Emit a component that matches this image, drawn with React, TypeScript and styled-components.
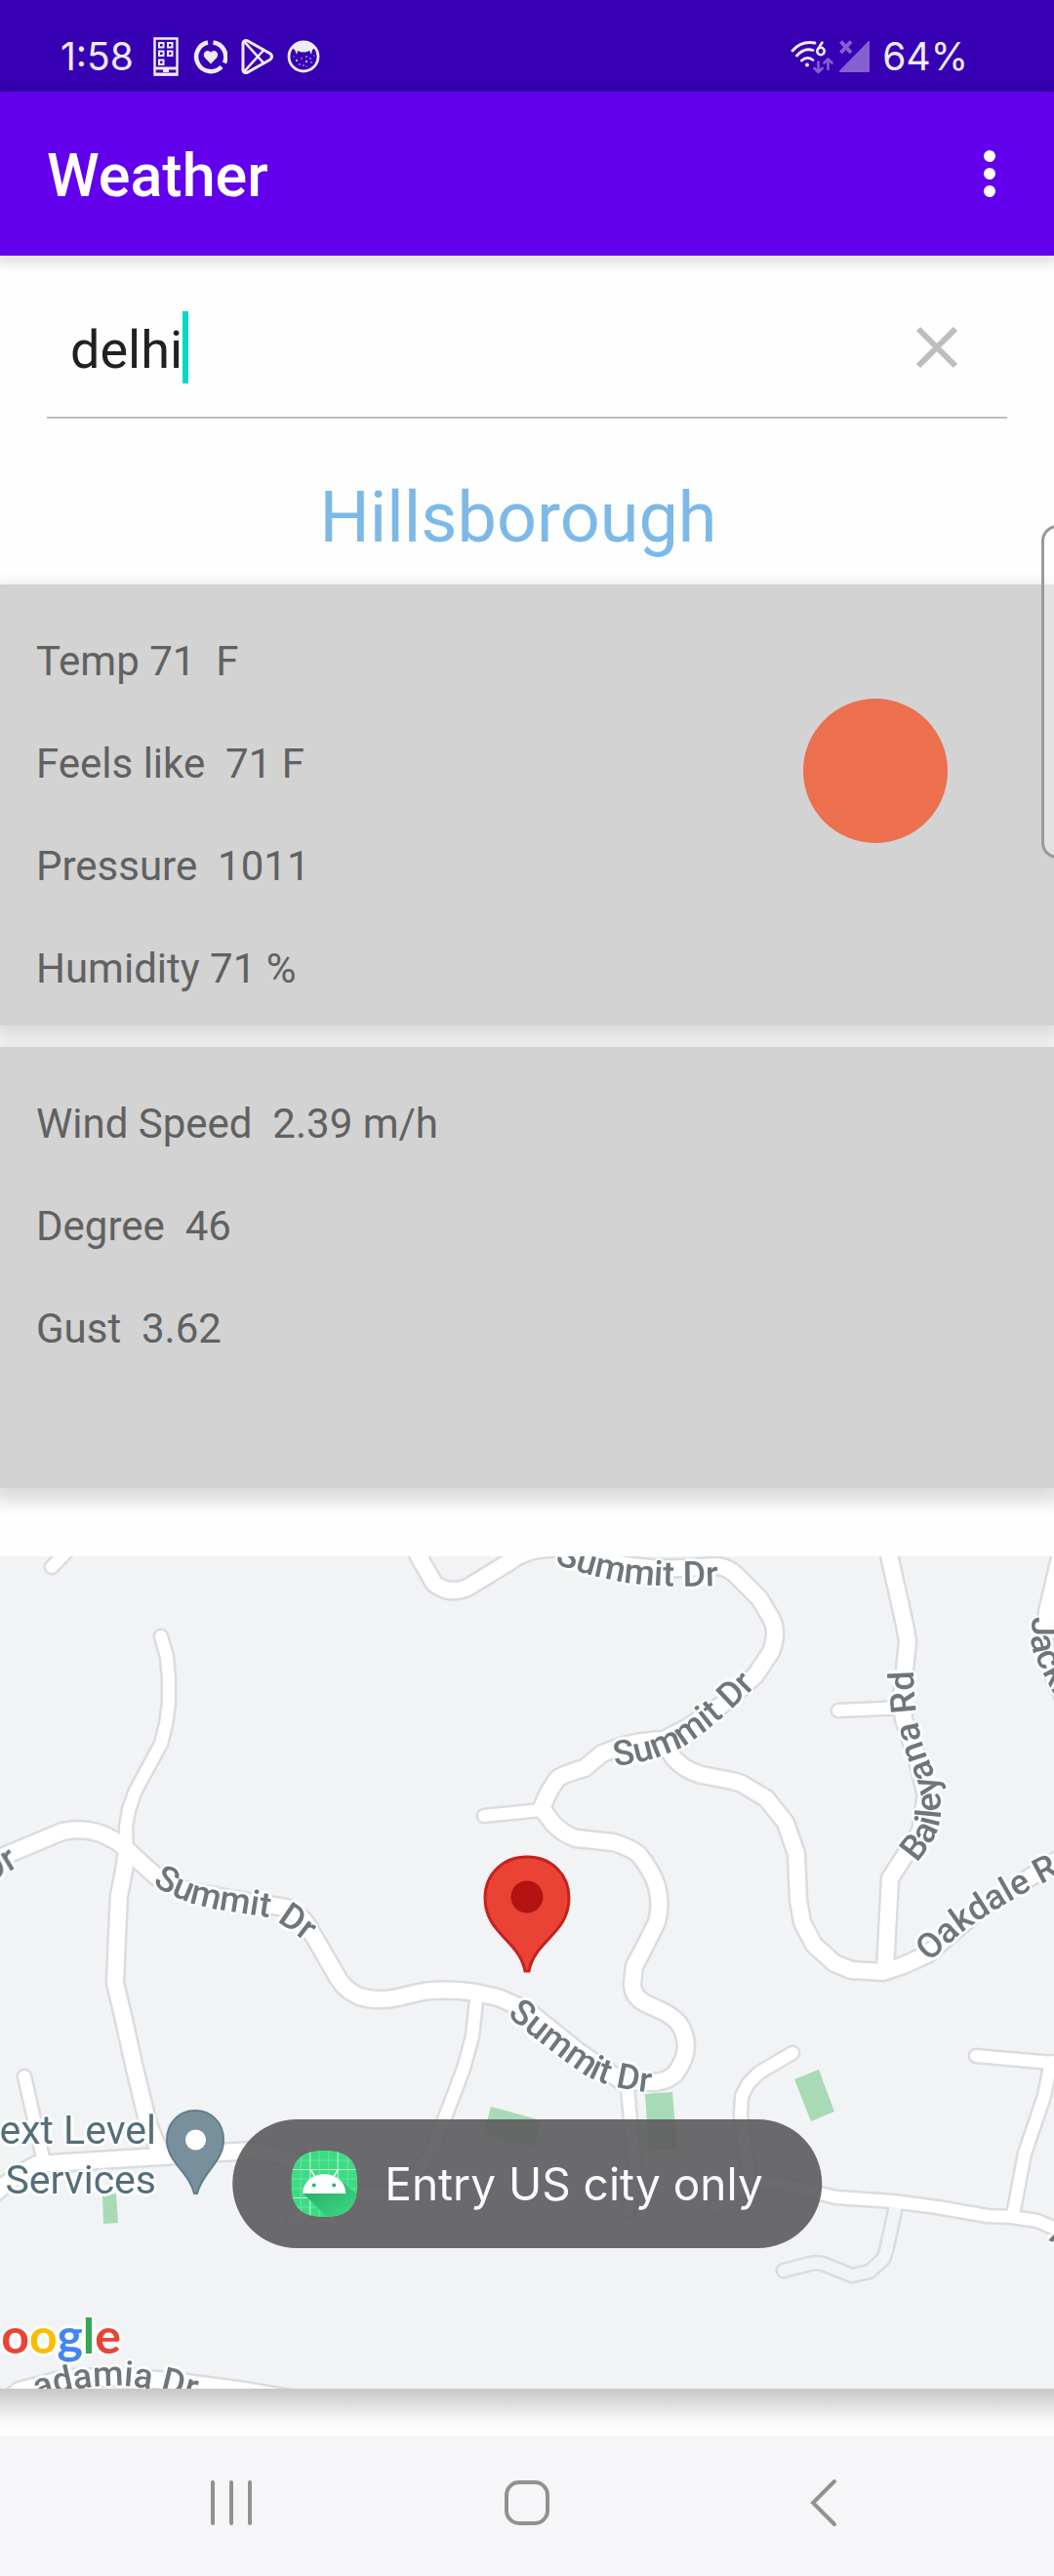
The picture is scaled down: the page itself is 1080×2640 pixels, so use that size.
import React, { useState } from "react";
import styled, { createGlobalStyle } from "styled-components";

const GlobalStyle = createGlobalStyle`
  *, *::before, *::after { box-sizing: border-box; }
  body {
    margin: 0;
    background: #fefefe;
    font-family: Roboto, "Liberation Sans", sans-serif;
  }
`;

const Screen = styled.div`
  position: relative;
  display: flex;
  flex-direction: column;
  min-height: 100vh;
  overflow: hidden;
`;

const StatusBar = styled.div`
  display: flex;
  justify-content: space-between;
  height: 94px;
  padding: 22px 88px 0 62px;
  background: #3700b3;
  color: #f0ebfa;
  font-family: Inter, Roboto, sans-serif;
  font-size: 39px;
  line-height: 72px;
`;

const StatusGroup = styled.div<{ $gap: number }>`
  display: flex;
  align-items: center;
  gap: ${(p) => p.$gap}px;

  svg { display: block; }
`;

const StatusText = styled.span`
  min-width: 81px;
`;

const Percent = styled.span`
  margin-left: 6px;
`;

const AppBar = styled.header`
  display: flex;
  align-items: center;
  justify-content: space-between;
  height: 168px;
  padding: 0 42px 0 48px;
  background: #6200ee;
  box-shadow: 0 4px 12px 4px rgba(0, 0, 0, 0.12);
`;

const Title = styled.h1`
  margin: 0;
  padding-top: 4px;
  color: #ffffff;
  font-size: 61px;
  font-weight: 500;
  line-height: 72px;
`;

const IconButton = styled.button`
  display: flex;
  align-items: center;
  justify-content: center;
  padding: 0;
  border: 0;
  background: none;
  cursor: pointer;
`;

const SearchBox = styled.form`
  display: flex;
  align-items: center;
  margin: 0 48px;
  padding: 57px 48px 34px 24px;
  border-bottom: 2px solid #bdbdbd;
`;

const SearchInput = styled.input`
  field-sizing: content;
  min-width: 20px;
  height: 74px;
  padding: 4px 0 0;
  border: 0;
  outline: 0;
  background: none;
  color: #212121;
  font: 400 54px/70px Roboto, "Liberation Sans", sans-serif;
`;

const Caret = styled.span`
  width: 6px;
  height: 74px;
  background: #03dac5;
`;

const ClearButton = styled(IconButton)`
  width: 48px;
  height: 48px;
  margin-left: auto;
`;

const City = styled.h2`
  margin: 0;
  padding: 60px 18px 26px 0;
  color: #7cb9e8;
  font-size: 72px;
  font-weight: 400;
  line-height: 84px;
  text-align: center;
`;

const Card = styled.section`
  display: flex;
  align-items: center;
  justify-content: space-between;
  min-height: 452px;
  padding: 0 109px 0 37px;
  background: #d3d3d3;
  box-shadow: 0 8px 16px 6px rgba(0, 0, 0, 0.14);

  & + & { margin-top: 22px; }
`;

const Readings = styled.ul`
  align-self: flex-start;
  margin: 0;
  padding: 26px 0 6px;
  list-style: none;
`;

const Reading = styled.li`
  color: #616161;
  font-size: 42px;
  line-height: 105px;
  white-space: pre;
`;

const Sun = styled.div`
  width: 148px;
  height: 148px;
  margin-top: -70px;
  border-radius: 50%;
  background: #ec6f4e;
`;

const MapCard = styled.section`
  margin-top: 70px;
  padding-bottom: 48px;
  background: linear-gradient(to top, #fefefe 4px, #f8f8f8 16px, #e4e4e4 28px, #cfcfcf 42px, #c8c8c8 48px);
`;

const MapSvg = styled.svg`
  display: block;
  width: 100%;
  height: auto;
  overflow: hidden;
  background: #f1f3f5;
`;

const RoadLabel = styled.text`
  font: 500 36px Roboto, "Liberation Sans", sans-serif;
  fill: #70757a;
`;

const PlaceLabel = styled.text`
  font: 400 41px Roboto, "Liberation Sans", sans-serif;
  fill: #546e7a;
`;

const MapBrand = styled.text`
  font: 700 50px Lato, "Open Sans", sans-serif;
`;

const NavBar = styled.nav`
  display: grid;
  grid-template-columns: repeat(3, 1fr);
  height: 144px;
  margin-top: auto;
  padding: 0 86px 6px;
  background: #f6f6f8;
`;

const Toast = styled.div`
  position: absolute;
  bottom: 336px;
  left: 50%;
  display: flex;
  align-items: center;
  gap: 28px;
  height: 132px;
  padding: 0 60px;
  border-radius: 66px;
  transform: translateX(-50%);
  background: rgba(91, 90, 92, 0.9);
  color: #fafaff;
  font-family: Inter, Roboto, sans-serif;
  font-size: 46px;
  line-height: 60px;
  white-space: nowrap;
`;

const EdgeHandle = styled.div`
  position: absolute;
  top: 538px;
  right: -20px;
  width: 33px;
  height: 342px;
  border: 3px solid #9a9a9a;
  border-radius: 18px;
  background: rgba(255, 255, 255, 0.35);
`;

type Line = { d: string; w?: number; hollow?: boolean };

const roads: Line[] = [
  { d: "M918 2261 L908 2307 L905 2315 L891 2328 L873 2332 L843 2320 Q836 2318 826 2321 L803 2327", w: 17, hollow: true },
  { d: "M53 1606 L80 1578", w: 17 },
  { d: "M165 1677 L171 1698 L173 1720 L173 1745 L170 1767 L165 1787 L138 1837 L132 1855 L129 1872 L130 1900", w: 17 },
  { d: "M130 1897 L127 1917 L122 1943 L120 1983 L118 2032 L127 2070 L138 2120 L152 2177 L165 2209" },
  { d: "M25 2128 L45 2216", w: 17 },
  { d: "M496 1861 L555 1855", w: 17 },
  { d: "M859 1753 L926 1750", w: 17 },
  { d: "M643 2140 L652 2237 L644 2265", w: 17 },
  { d: "M812 2104 L778 2124 L767 2135 L760 2148 L759 2167 L764 2207 L770 2237", w: 17 },
  { d: "M488 2050 L484 2087 L475 2120 L456 2170 L444 2200 Q432 2225 412 2241 Q396 2251 365 2248 L340 2250 L301 2277", w: 17 },
  { d: "M1000 2107 L1090 2115", w: 17 },
  { d: "M1077 2113 L1070 2148 L1050 2207 L1038 2270", w: 17 },
  { d: "M-15 2255 L0 2243 L21 2227 L38 2218 L100 2214 L165 2210 L241 2205 L262 2204 L289 2210 L305 2219 L330 2240 L365 2248" },
  { d: "M733 2262 L760 2243 L781 2237 L802 2238 L836 2247 L857 2252 L915 2256 L960 2262 L1012 2271 L1036 2272 L1063 2276 L1090 2288", w: 17 },
  { d: "M-20 1912 L21 1895 L64 1877 Q82 1873 100 1878 Q120 1884 138 1903 L160 1923 Q175 1932 193 1938 L241 1947 L293 1955 Q308 1962 315 1973 L344 2023 Q352 2039 368 2046 Q387 2052 408 2047 L429 2042 Q452 2037 487 2042 L510 2047 L540 2060 L561 2077 L592 2102 L636 2132 L671 2134 Q686 2132 692 2125 Q703 2110 703 2096 Q702 2082 695 2073 Q688 2065 674 2059 L661 2053 Q648 2046 648 2033 L650 2015 L659 1998 L673 1970 Q678 1952 673 1933 Q668 1917 654 1900 Q645 1893 628 1888 L590 1884 Q576 1879 566 1868 L555 1853 L562 1837 L571 1823 Q575 1819 599 1812 L617 1797 L636 1790 Q655 1784 680 1783 L702 1772 L740 1747 L774 1717 L790 1693 Q798 1672 790 1658 L778 1638 L757 1617 Q747 1606 735 1605 L700 1607 Q640 1610 600 1592 Q550 1578 520 1602 L479 1627 Q460 1635 445 1623 L429 1595 L423 1580" },
  { d: "M680 1783 Q688 1802 697 1808 Q705 1815 719 1819 L750 1825 L760 1828 L785 1843 L805 1868 L816 1900 L818 1947 L822 1970 L834 1993 L855 2012 L872 2019 L905 2021 L926 2014 L950 2003 L1000 1960 L1080 1908 L1100 1900" },
  { d: "M907 2019 L912 1925 L943 1877 L949 1840 L939 1800 L926 1762 L924 1740 L930 1682 L927 1665 L908 1580" },
  { d: "M1090 1580 L1073 1652 L1070 1680 L1074 1705 L1092 1745" },
  { d: "M-20 2480 L20 2450 L70 2437 L130 2436 L190 2442 L250 2450 L320 2462" },
];

const parks = [
  "105,2250 119,2248 121,2278 106,2279",
  "503,2159 554,2173 548,2199 496,2186",
  "661,2146 689,2144 694,2202 665,2204",
  "814,2131 839,2121 855,2164 831,2174",
];

const curvedLabels = [
  { id: "summit-west", text: "Summit Dr", d: "M156 1931 Q186 1951 224 1957 L275 1965 Q292 1972 330 2004" },
  { id: "summit-north", text: "Summit Dr", d: "M568 1602 Q605 1616 643 1622 T760 1624" },
  { id: "summit-mid", text: "Summit Dr", d: "M630 1810 Q668 1806 700 1790 Q745 1762 800 1700" },
  { id: "summit-south", text: "Summit Dr", d: "M519 2065 Q560 2100 600 2127 Q630 2144 700 2147" },
  { id: "baileyana", text: "Baileyana Rd", d: "M939 1909 Q966 1880 964 1850 Q962 1825 950 1800 Q934 1762 936 1680" },
  { id: "oakdale", text: "Oakdale Rd", d: "M952 2011 L985 1981 Q1020 1955 1069 1930 L1130 1898" },
  { id: "jackling", text: "Jackling Dr", d: "M1057 1657 L1057 1685 Q1062 1715 1150 1850" },
  { id: "macadamia", text: "adamia Dr", d: "M38 2459 Q75 2446 115 2445 Q155 2444 220 2466" },
];

function PhoneIcon() {
  return (
    <svg width="26" height="40" viewBox="0 0 26 40" fill="none" stroke="currentColor" aria-hidden="true">
      <path d="M1.5 1.5H24.5V38.5H1.5Z" strokeWidth="2.4" />
      <path d="M1 32H25M1 38H25" strokeWidth="3" />
      <path d="M10 34.500h6" strokeWidth="3" />
      <path d="M6 6h4.500v4.500H6ZM15 6h4.500v4.500H15ZM6 14.500h4.500v4.500H6ZM15 14.500h4.500v4.500H15ZM6 23.500h4.500v4.500H6Z" strokeWidth="2" />
    </svg>
  );
}

function HeartRingIcon() {
  return (
    <svg width="36" height="36" viewBox="0 0 36 36" aria-hidden="true">
      <path d="M16 3.500A15 15 0 1 0 30 28.500" fill="none" stroke="currentColor" strokeWidth="4.500" />
      <path d="M21.500 3.500A15 15 0 0 1 33 24.500" fill="none" stroke="currentColor" strokeWidth="4.500" />
      <path d="M19 25.500 13 19.200C10.400 16 12.500 12 15.700 12c1.500 0 2.600.700 3.300 1.800.700-1.100 1.800-1.800 3.300-1.800 3.200 0 5.300 4 2.700 7.200Z" fill="currentColor" />
    </svg>
  );
}

function PlayIcon() {
  return (
    <svg width="33" height="38" viewBox="0 0 33 38" fill="none" stroke="currentColor" strokeWidth="3" strokeLinejoin="round" aria-hidden="true">
      <path d="M2 5Q3 1.500 7 3L30 16Q33 19 30 22L7 35Q3 36.500 2 33Z" />
      <path d="M3.500 4 23.500 26M3.500 34 23.500 12" strokeWidth="2.600" />
    </svg>
  );
}

function FaceIcon() {
  return (
    <svg width="34" height="36" viewBox="0 0 34 36" aria-hidden="true">
      <circle cx="17" cy="18" r="15" fill="none" stroke="currentColor" strokeWidth="2.800" />
      <path d="M5 9Q10 2 17 2T29 9L26 11 25 16 23 12Q17 15 11 12L10 16 8 11Z" fill="currentColor" />
      <g fill="currentColor">
        <circle cx="10" cy="22" r="1" /><circle cx="15" cy="20" r="0.700" /><circle cx="20" cy="18" r="0.800" />
        <circle cx="24" cy="20" r="0.800" /><circle cx="20" cy="23" r="1" /><circle cx="13" cy="26" r="0.800" />
        <circle cx="17" cy="27" r="0.800" /><circle cx="25" cy="24" r="0.700" /><circle cx="20" cy="28" r="0.600" />
        <circle cx="7" cy="18" r="0.600" /><circle cx="28" cy="17" r="0.600" />
      </g>
    </svg>
  );
}

function WifiIcon() {
  return (
    <svg width="44" height="36" viewBox="0 0 44 36" fill="none" stroke="currentColor" strokeWidth="2.800" strokeLinecap="round" aria-hidden="true">
      <path d="M2 12Q11 1.500 25 4M6.500 17Q14 8.500 23 11.500M11.500 22Q17 17 23 21.500" />
      <circle cx="17" cy="26.500" r="2" fill="currentColor" stroke="none" />
      <path d="M32.500 3.500 28 10.500" strokeWidth="2.500" />
      <circle cx="31" cy="12.500" r="3.700" strokeWidth="2.500" />
      <g stroke="#8560d0" strokeWidth="2.600">
        <path d="M28.500 23.500V33.500M24.500 30 28.500 34 32.500 30M38.500 31V20.500M34.500 24.500 38.500 20.500 42.500 24.500" />
      </g>
    </svg>
  );
}

function SignalIcon() {
  return (
    <svg width="34" height="36" viewBox="0 0 34 36" aria-hidden="true">
      <path d="M32 2.500V34H2Q0 34 1.500 32L30 3Q32 1 32 2.500Z" fill="#8560d0" />
      <path d="M2.500 2.500 13 14M13 2.500 2.500 14" stroke="#8560d0" strokeWidth="4" />
    </svg>
  );
}

function AndroidIcon() {
  return (
    <svg width="68" height="68" viewBox="0 0 68 68" aria-hidden="true">
      <defs>
        <clipPath id="squircle">
          <path d="M34 0C58 0 68 10 68 34S58 68 34 68 0 58 0 34 10 0 34 0Z" />
        </clipPath>
        <linearGradient id="fold" x1="0" y1="0" x2="1" y2="1">
          <stop offset="0" stopColor="#2aa566" />
          <stop offset="1" stopColor="#3ddc84" />
        </linearGradient>
      </defs>
      <g clipPath="url(#squircle)">
        <rect width="68" height="68" fill="#3ddc84" />
        <path d="M10 0V68M19.500 0V68M29 0V68M38.500 0V68M48 0V68M58 0V68M0 10H68M0 19.500H68M0 29H68M0 39H68M0 48.500H68M0 58H68" stroke="#7be8ab" strokeWidth="0.700" />
        <path d="M19.500 0V68M48 0V68M0 19.500H68M0 48.500H68" stroke="#b5f2cf" strokeWidth="1" />
        <path d="M12 43.500 37 68H68V46L54 33 56 43.500Z" fill="url(#fold)" />
        <path d="M12 44A22 20 0 0 1 56 44Z" fill="#ffffff" />
        <path d="M24 26 20 19.500M44 26 48 19.500" stroke="#ffffff" strokeWidth="1.500" />
        <circle cx="23.500" cy="35.500" r="2" fill="#2fb36d" />
        <circle cx="44" cy="35.500" r="2" fill="#2fb36d" />
      </g>
    </svg>
  );
}

function CityMap() {
  return (
    <MapSvg viewBox="0 1595 1080 853" role="img" aria-label="Map of Hillsborough">
      <defs>
        {curvedLabels.map((l) => (
          <path key={l.id} id={l.id} d={l.d} />
        ))}
        <filter id="halo" filterUnits="userSpaceOnUse" x="-20" y="1575" width="1120" height="893" colorInterpolationFilters="sRGB">
          <feGaussianBlur in="SourceAlpha" stdDeviation="2.500" result="soft" />
          <feComponentTransfer in="soft" result="wide">
            <feFuncA type="linear" slope="12" intercept="-0.700" />
          </feComponentTransfer>
          <feFlood floodColor="#fcfdfd" />
          <feComposite in2="wide" operator="in" result="rim" />
          <feMerge>
            <feMergeNode in="rim" />
            <feMergeNode in="SourceGraphic" />
          </feMerge>
        </filter>
      </defs>
      <g fill="none" strokeLinecap="round" strokeLinejoin="round">
        {roads.map((r) => (
          <path key={r.d} d={r.d} stroke="#dadce0" strokeWidth={r.w ?? 21} />
        ))}
        {roads.map((r) => (
          <path key={r.d} d={r.d} stroke={r.hollow ? "#f1f3f5" : "#ffffff"} strokeWidth={(r.w ?? 21) - 5} />
        ))}
      </g>
      <g fill="#a8dab5">
        {parks.map((p) => (
          <polygon key={p} points={p} />
        ))}
      </g>
      <g filter="url(#halo)">
        {curvedLabels.map((l) => (
          <RoadLabel key={l.id}>
            <textPath href={`#${l.id}`}>{l.text}</textPath>
          </RoadLabel>
        ))}
        <RoadLabel textAnchor="end" transform="translate(20 1912) rotate(-31)">Dr</RoadLabel>
        <RoadLabel transform="translate(1074 2296) rotate(22)">A</RoadLabel>
        <PlaceLabel x="160" y="2197" textAnchor="end">Next Level</PlaceLabel>
        <PlaceLabel x="160" y="2248" textAnchor="end">Services</PlaceLabel>
        <MapBrand x="124" y="2412" textAnchor="end">
          <tspan fill="#4285f4">G</tspan>
          <tspan fill="#ea4335">o</tspan>
          <tspan fill="#fbbc04">o</tspan>
          <tspan fill="#4285f4">g</tspan>
          <tspan fill="#34a853">l</tspan>
          <tspan fill="#ea4335">e</tspan>
        </MapBrand>
      </g>
      <path d="M200 2163C217 2163 229 2176 229 2193C229 2216 207 2226 202 2248H199C194 2226 171 2216 171 2193C171 2176 183 2163 200 2163Z" fill="#78909c" stroke="#607d8b" strokeWidth="2" />
      <circle cx="200.500" cy="2193" r="10.500" fill="#ffffff" />
      <path d="M540 1903C565 1903 583 1921 583 1945C583 1982 548 1988 542 2020H538C532 1988 497 1982 497 1945C497 1921 515 1903 540 1903Z" fill="#ea4335" stroke="#c5221f" strokeWidth="3" />
      <circle cx="540" cy="1944" r="16.500" fill="#b31412" />
    </MapSvg>
  );
}

export default function App() {
  const [query, setQuery] = useState("delhi");
  return (
    <>
      <GlobalStyle />
      <Screen>
        <StatusBar>
          <StatusGroup $gap={14}>
            <StatusText>1:58</StatusText>
            <PhoneIcon />
            <HeartRingIcon />
            <PlayIcon />
            <FaceIcon />
          </StatusGroup>
          <StatusGroup $gap={5}>
            <WifiIcon />
            <SignalIcon />
            <Percent>64%</Percent>
          </StatusGroup>
        </StatusBar>
        <AppBar>
          <Title>Weather</Title>
          <IconButton type="button" aria-label="More options">
            <svg width="48" height="48" viewBox="0 0 48 48" fill="#ffffff" aria-hidden="true">
              <circle cx="24" cy="6" r="6" />
              <circle cx="24" cy="24" r="6" />
              <circle cx="24" cy="42" r="6" />
            </svg>
          </IconButton>
        </AppBar>
        <main>
          <SearchBox role="search" onSubmit={(e) => e.preventDefault()}>
            <SearchInput type="text" aria-label="Search city" value={query} onChange={(e) => setQuery(e.target.value)} />
            <Caret />
            <ClearButton type="button" aria-label="Clear search" onClick={() => setQuery("")}>
              <svg width="48" height="48" viewBox="0 0 48 48" stroke="#bdbdbd" strokeWidth="6" aria-hidden="true">
                <path d="M5 5 43 43M43 5 5 43" />
              </svg>
            </ClearButton>
          </SearchBox>
          <City>Hillsborough</City>
          <Card>
            <Readings>
              <Reading>{"Temp 71  F"}</Reading>
              <Reading>{"Feels like  71 F"}</Reading>
              <Reading>{"Pressure  1011"}</Reading>
              <Reading>{"Humidity 71 %"}</Reading>
            </Readings>
            <Sun role="img" aria-label="Clear sky" />
          </Card>
          <Card>
            <Readings>
              <Reading>{"Wind Speed  2.39 m/h"}</Reading>
              <Reading>{"Degree  46"}</Reading>
              <Reading>{"Gust  3.62"}</Reading>
            </Readings>
          </Card>
          <MapCard>
            <CityMap />
          </MapCard>
        </main>
        <NavBar aria-label="System">
          <IconButton type="button" aria-label="Recent apps">
            <svg width="48" height="48" viewBox="0 0 48 48" stroke="#919191" strokeWidth="4" strokeLinecap="round" aria-hidden="true">
              <path d="M5 3V45M24 3V45M43 3V45" />
            </svg>
          </IconButton>
          <IconButton type="button" aria-label="Home">
            <svg width="48" height="48" viewBox="0 0 48 48" fill="none" stroke="#919191" strokeWidth="4" aria-hidden="true">
              <rect x="3" y="3" width="42" height="42" rx="13" />
            </svg>
          </IconButton>
          <IconButton type="button" aria-label="Back">
            <svg width="48" height="52" viewBox="0 0 48 52" fill="none" stroke="#919191" strokeWidth="4" strokeLinecap="round" aria-hidden="true">
              <path d="M36 4 14 26 36 48" />
            </svg>
          </IconButton>
        </NavBar>
        <EdgeHandle />
        <Toast role="status">
          <AndroidIcon />
          <span>Entry US city only</span>
        </Toast>
      </Screen>
    </>
  );
}
